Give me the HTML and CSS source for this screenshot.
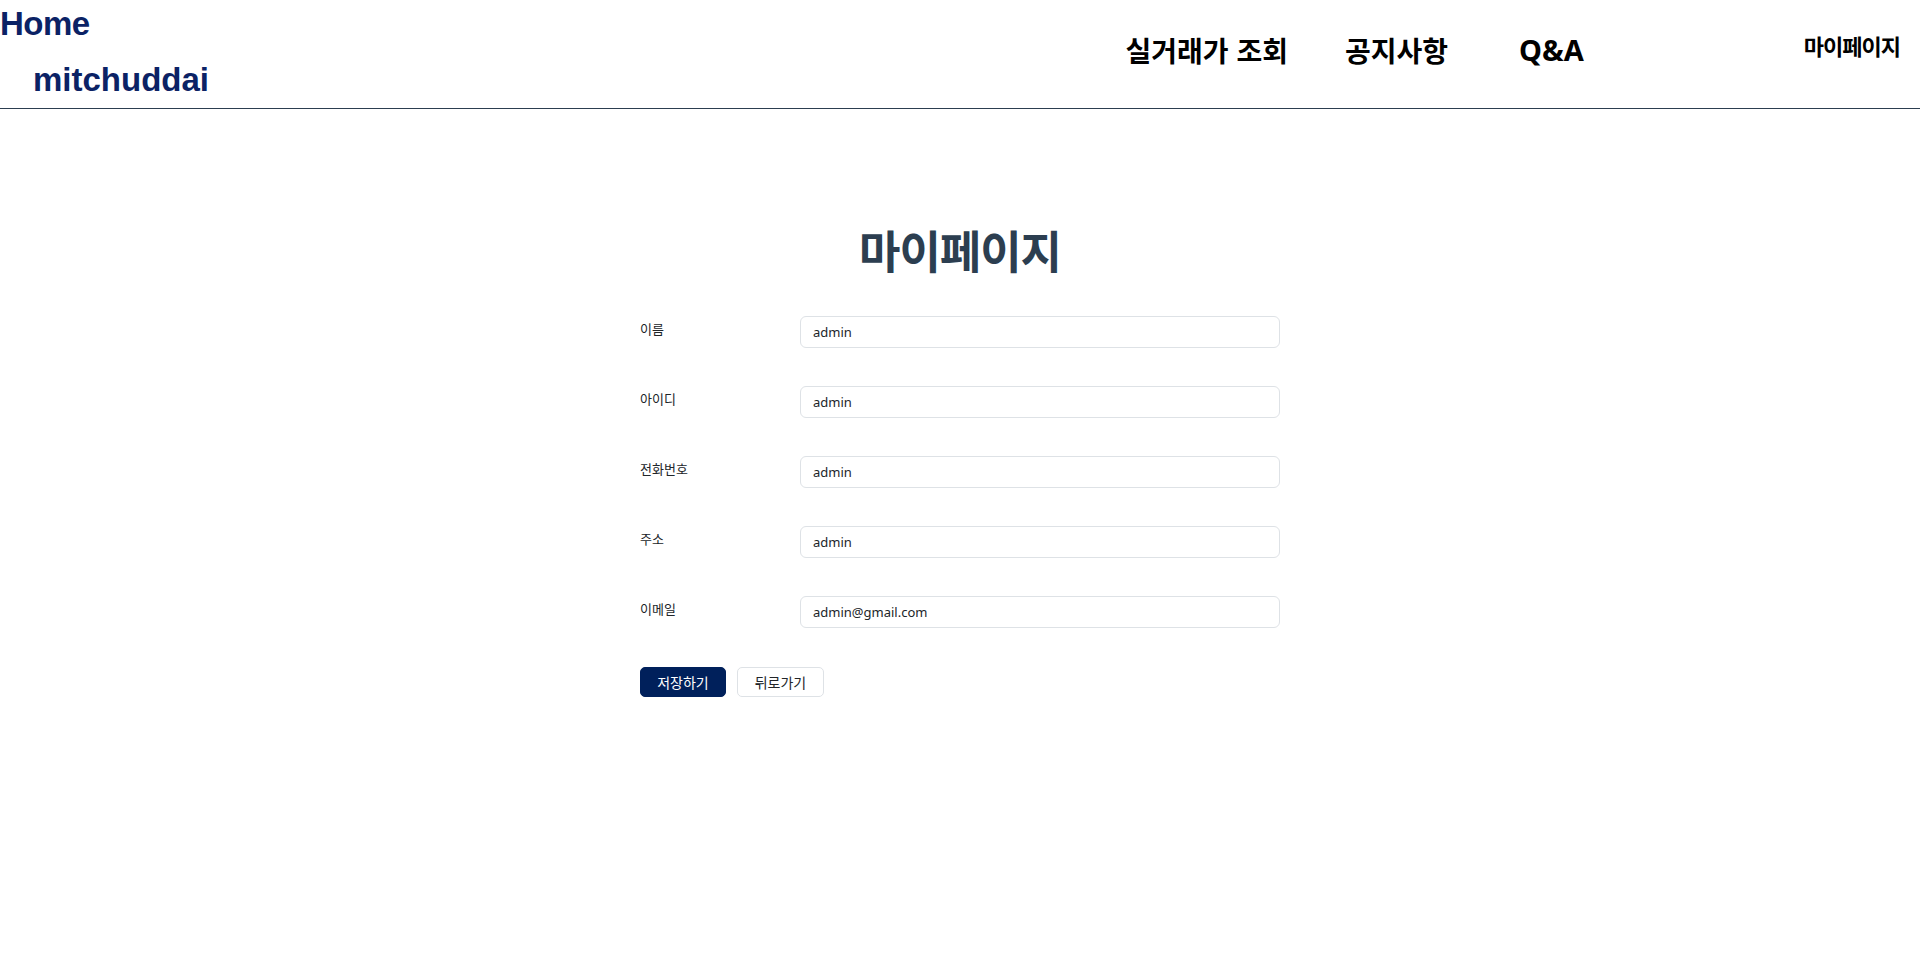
FILE: index.html
```html
<!DOCTYPE html>
<html lang="ko">
<head>
<meta charset="utf-8">
<title>마이페이지</title>
<link rel="stylesheet" href="styles.css">
</head>
<body>
<header class="site-header">
  <div class="brand">
    <a class="brand-home" href="#">Home</a>
    <a class="brand-name" href="#">mitchuddai</a>
  </div>
  <nav class="main-nav">
    <a class="nav-link" href="#">실거래가 조회</a>
    <a class="nav-link" href="#">공지사항</a>
    <a class="nav-link nav-qa" href="#">Q&amp;A</a>
  </nav>
  <a class="mypage-link" href="#">마이페이지</a>
</header>

<main class="page">
  <h1 class="page-title">마이페이지</h1>
  <form class="profile-form">
    <div class="form-row">
      <label class="form-label" for="name">이름</label>
      <input class="form-input" id="name" type="text" value="admin">
    </div>
    <div class="form-row">
      <label class="form-label" for="uid">아이디</label>
      <input class="form-input" id="uid" type="text" value="admin">
    </div>
    <div class="form-row">
      <label class="form-label" for="phone">전화번호</label>
      <input class="form-input" id="phone" type="text" value="admin">
    </div>
    <div class="form-row">
      <label class="form-label" for="addr">주소</label>
      <input class="form-input" id="addr" type="text" value="admin">
    </div>
    <div class="form-row">
      <label class="form-label" for="email">이메일</label>
      <input class="form-input" id="email" type="text" value="admin@gmail.com">
    </div>
    <div class="form-actions">
      <button class="btn btn-primary" type="button">저장하기</button>
      <button class="btn btn-outline" type="button">뒤로가기</button>
    </div>
  </form>
</main>
</body>
</html>
```

FILE: styles.css
```css
* { box-sizing: border-box; }

html, body {
  margin: 0;
  padding: 0;
  background: #ffffff;
  font-family: "Noto Sans", "Noto Sans CJK KR", sans-serif;
  color: #212529;
}

a { text-decoration: none; }

.site-header {
  display: flex;
  align-items: flex-start;
  height: 109px;
  border-bottom: 1px solid #2c3e50;
}

.brand {
  display: flex;
  flex-direction: column;
}

.brand-home,
.brand-name {
  font-family: "Liberation Sans", "Noto Sans CJK KR", sans-serif;
  font-weight: 700;
  font-size: 33px;
  line-height: 38px;
  color: #0b2265;
}

.brand-home {
  margin-top: 5px;
  letter-spacing: -0.5px;
}

.brand-name {
  margin-top: 18px;
  margin-left: 33px;
}

.main-nav {
  display: flex;
  align-items: center;
  gap: 57px;
  margin-left: auto;
  margin-top: 30px;
}

.nav-link {
  font-family: "Noto Sans CJK KR", "Noto Sans", sans-serif;
  font-weight: 700;
  font-size: 28px;
  line-height: 40px;
  color: #000000;
}

.nav-qa {
  margin-left: 14px;
  font-family: "Noto Sans", "Noto Sans CJK KR", sans-serif;
  font-size: 29px;
}

.mypage-link {
  margin-left: 220px;
  margin-right: 20px;
  margin-top: 29px;
  font-family: "Noto Sans CJK KR", sans-serif;
  font-weight: 700;
  font-size: 22px;
  line-height: 32px;
  color: #000000;
  letter-spacing: -1px;
}

.page {
  width: 640px;
  margin: 0 auto;
  padding-top: 113px;
}

.page-title {
  margin: 0 0 38px;
  text-align: center;
  font-family: "Noto Sans CJK KR", sans-serif;
  font-weight: 700;
  font-size: 45px;
  line-height: 56px;
  color: #2c3e50;
  letter-spacing: -1px;
}

.profile-form {
  display: flex;
  flex-direction: column;
  gap: 38px;
}

.form-row {
  display: flex;
  align-items: flex-start;
}

.form-label {
  width: 160px;
  flex: none;
  padding-top: 3px;
  font-family: "Noto Sans CJK KR", sans-serif;
  font-size: 13px;
  line-height: 20px;
  color: #212529;
}

.form-input {
  width: 480px;
  height: 32px;
  padding: 0 12px;
  border: 1px solid #dee2e6;
  border-radius: 6px;
  font-family: "Noto Sans", "Noto Sans CJK KR", sans-serif;
  font-size: 13px;
  color: #212529;
  background: #fff;
  outline: none;
}

.form-actions {
  display: flex;
  gap: 11px;
  margin-top: 1px;
}

.btn {
  height: 30px;
  padding: 0 10px;
  border-radius: 5px;
  font-family: "Noto Sans CJK KR", sans-serif;
  font-size: 14px;
  line-height: 28px;
  cursor: pointer;
}

.btn-primary {
  width: 86px;
  border: 1px solid #00205b;
  background: #00205b;
  color: #ffffff;
}

.btn-outline {
  width: 87px;
  border: 1px solid #dee2e6;
  background: #ffffff;
  color: #212529;
}
```
